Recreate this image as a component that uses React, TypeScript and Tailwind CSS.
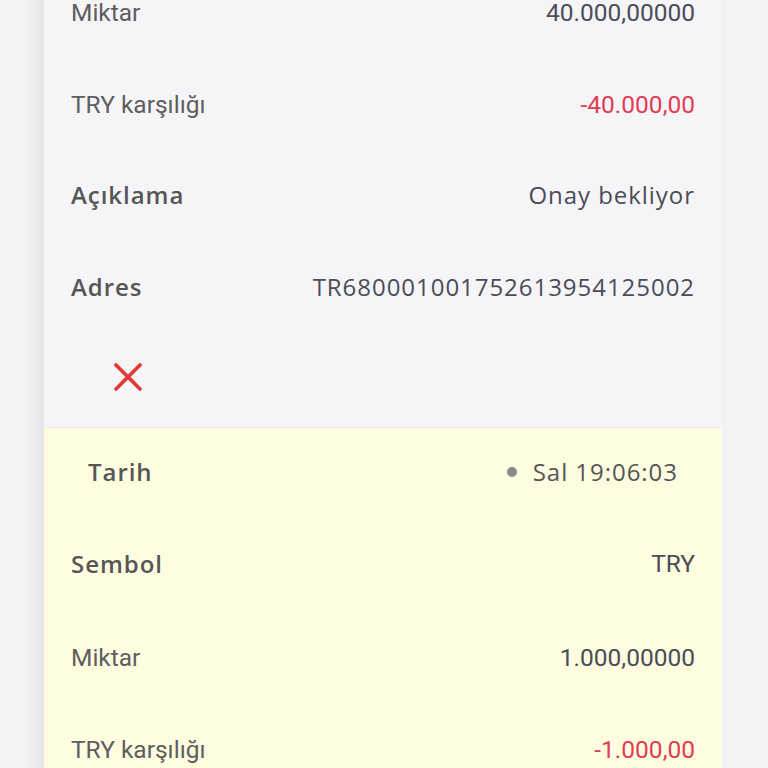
import React from "react";
import { X } from "lucide-react";

type Row = {
  label: string;
  value: string;
  strong?: boolean;
  red?: boolean;
  plain?: boolean;
};

const poppins = "font-['Open_Sans',sans-serif] tracking-[0.04em]";
const plex = "font-['Roboto',sans-serif]";

const pending: Row[] = [
  { label: "Miktar", value: "40.000,00000" },
  { label: "TRY karşılığı", value: "-40.000,00", red: true },
  { label: "Açıklama", value: "Onay bekliyor", strong: true },
  { label: "Adres", value: "TR680001001752613954125002", strong: true },
];

const next: Row[] = [
  { label: "Sembol", value: "TRY", strong: true, plain: true },
  { label: "Miktar", value: "1.000,00000" },
  { label: "TRY karşılığı", value: "-1.000,00", red: true },
];

const DetailRow = ({ row }: { row: Row }) => (
  <div
    className={`flex h-[92px] items-center justify-between px-[27px] ${
      row.strong ? "pb-[4px]" : ""
    }`}
  >
    <span
      className={
        row.strong
          ? `${poppins} text-[24px] font-semibold text-[#565656]`
          : `${plex} text-[24.5px] text-[#5e5e5e]`
      }
    >
      {row.label}
    </span>
    <span
      className={
        row.red
          ? `${plex} text-[24.5px] text-[#e23b56]`
          : row.strong && !row.plain
          ? `${poppins} text-[24px] text-[#4a4c58]`
          : `${plex} text-[24.5px] text-[#4a4d58]`
      }
    >
      {row.value}
    </span>
  </div>
);

export default function App() {
  return (
    <div className="h-[768px] overflow-hidden bg-[#f4f4f6]">
      <div className="-mt-[33px] ml-[44px] w-[678px] shadow-[-8px_0_18px_rgba(0,0,0,0.07)]">
        <div className="bg-[#f5f5f8]">
          {pending.map((r, i) => (
            <DetailRow key={i} row={r} />
          ))}
          <div className="h-[92px] pl-[60px] pt-[18px]">
            <X className="h-[48px] w-[48px] text-[#e53935]" strokeWidth={1.9} />
          </div>
        </div>
        <div className="border-t border-[#ececec] bg-[#fefde0]">
          <div className="flex h-[92px] items-center justify-between px-[44px] pb-[4px]">
            <span className={`${poppins} text-[24px] font-semibold text-[#565656]`}>
              Tarih
            </span>
            <span className="flex items-center gap-[16px]">
              <span className="h-[10px] w-[10px] rounded-full bg-[#8a8a8a]" />
              <span className={`${poppins} text-[24px] text-[#555555]`}>Sal 19:06:03</span>
            </span>
          </div>
          {next.map((r, i) => (
            <DetailRow key={i} row={r} />
          ))}
        </div>
      </div>
    </div>
  );
}
